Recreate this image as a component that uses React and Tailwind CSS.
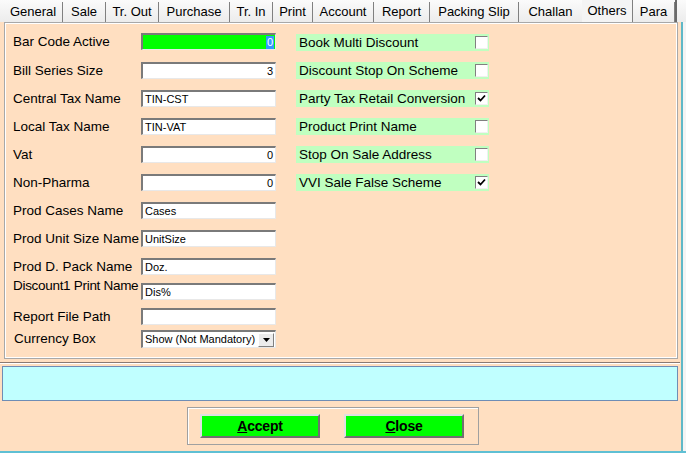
import React from "react";

const tabs = [
  { t: "General", w: "w-[59px]" },
  { t: "Sale", w: "w-[43px]" },
  { t: "Tr. Out", w: "w-[53px]" },
  { t: "Purchase", w: "w-[71px]" },
  { t: "Tr. In", w: "w-[43px]" },
  { t: "Print", w: "w-[40px]" },
  { t: "Account", w: "w-[61px]" },
  { t: "Report", w: "w-[56px]" },
  { t: "Packing Slip", w: "w-[89px]" },
  { t: "Challan", w: "w-[63px]", noSep: true },
  { t: "Others", w: "w-[51px]", sel: true },
  { t: "Para", w: "w-[42px]" },
];

function Input({ value, right, green, sel }) {
  return (
    <div
      className={`w-[135px] h-[17px] border-t-2 border-l-2 border-t-[#7a7a7a] border-l-[#7a7a7a] border-b border-r border-b-[#e8e8e8] border-r-[#e8e8e8] flex items-center ${
        green ? "bg-[#00ff00]" : "bg-white"
      } ${right ? "justify-end pr-[1px]" : "justify-start pl-[2px]"} text-[11px] leading-none text-black`}
    >
      {sel ? (
        <span className="bg-[#3399ff] text-white px-[1px] h-[13px] flex items-center">{value}</span>
      ) : (
        <span className={right ? "pr-[1px]" : ""}>{value}</span>
      )}
    </div>
  );
}

function Check({ checked }) {
  return (
    <div className="w-[13px] h-[13px] bg-white border border-t-[#808080] border-l-[#808080] border-b-[#f0f0f0] border-r-[#f0f0f0] flex items-center justify-center">
      {checked && (
        <svg width="9" height="9" viewBox="0 0 9 9">
          <path d="M1 4 L3.5 6.5 L8 1.5" stroke="black" strokeWidth="1.8" fill="none" />
        </svg>
      )}
    </div>
  );
}

function RRow({ label, checked, cls }) {
  return (
    <div className={`w-[193px] h-[17px] bg-[#c0ffc0] flex items-center justify-between pl-[3px] pr-[1px] ${cls}`}>
      <span className="text-[13.5px] leading-none text-black">{label}</span>
      <Check checked={checked} />
    </div>
  );
}

function LRow({ label, children, cls }) {
  return (
    <div className={`flex items-center h-[17px] ${cls}`}>
      <div className="w-[128px] text-[13.5px] leading-none text-black whitespace-nowrap">{label}</div>
      {children}
    </div>
  );
}

export default function App() {
  return (
    <div className="w-[686px] h-[453px] bg-[#ffdfc1] overflow-hidden flex flex-col font-['Liberation_Sans',Arial,sans-serif] text-black">
      {/* Tab strip */}
      <div className="h-[22px] w-full flex items-end bg-gradient-to-b from-[#fbfbfb] to-[#ececec] pl-[4px] shrink-0">
        {tabs.map((tb) => (
          <div
            key={tb.t}
            className={`${tb.w} flex justify-center text-[13px] leading-none ${
              tb.sel
                ? "h-[22px] items-start pt-[4px] bg-[#f4f4f4] border-r border-r-[#808080]"
                : tb.noSep
                ? "h-[20px] items-start pt-[3px]"
                : "h-[20px] items-start pt-[3px] border-r border-r-[#808080]"
            }`}
          >
            <span>{tb.t}</span>
          </div>
        ))}
        <div className="w-[2px] h-[22px] bg-[#6a6a6a]" />
      </div>

      <div className="flex flex-1">
        <div className="w-[681px] flex flex-col">
          {/* Panel */}
          <div className="ml-[4px] w-[674px] h-[337px] border border-[#a8a8a8] shadow-[inset_1px_1px_0_#ffffff,inset_-1px_-1px_0_#ffffff] flex">
            <div className="flex flex-col pl-[8px] pt-[10px]">
              <LRow label="Bar Code Active">
                <Input value="0" right green sel />
              </LRow>
              <LRow label="Bill Series Size" cls="mt-[12px]">
                <Input value="3" right />
              </LRow>
              <LRow label="Central Tax Name" cls="mt-[11px]">
                <Input value="TIN-CST" />
              </LRow>
              <LRow label="Local Tax Name" cls="mt-[11px]">
                <Input value="TIN-VAT" />
              </LRow>
              <LRow label="Vat" cls="mt-[11px]">
                <Input value="0" right />
              </LRow>
              <LRow label="Non-Pharma" cls="mt-[11px]">
                <Input value="0" right />
              </LRow>
              <LRow label="Prod Cases Name" cls="mt-[11px]">
                <Input value="Cases" />
              </LRow>
              <LRow label="Prod Unit Size Name" cls="mt-[11px]">
                <Input value="UnitSize" />
              </LRow>
              <LRow label="Prod D. Pack Name" cls="mt-[11px]">
                <Input value="Doz." />
              </LRow>
              <div className="flex h-[22px] mt-[3px]">
                <div className="w-[128px] text-[13.5px] leading-[16px] tracking-[-0.3px] whitespace-nowrap self-start">Discount1 Print Name</div>
                <div className="self-end">
                  <Input value="Dis%" />
                </div>
              </div>
              <LRow label="Report File Path" cls="mt-[8px]">
                <Input value="" />
              </LRow>
              <div className="flex items-center h-[18px] mt-[5px]">
                <div className="w-[128px] text-[13.5px] leading-none pl-[1px]">Currency Box</div>
                <div className="w-[135px] h-[18px] bg-white border-t-2 border-l-2 border-t-[#7a7a7a] border-l-[#7a7a7a] border-b border-r border-b-[#e8e8e8] border-r-[#e8e8e8] flex items-center justify-between pl-[2px] pr-[1px]">
                  <span className="text-[11px] leading-none">Show (Not Mandatory)</span>
                  <div className="w-[16px] h-[14px] bg-[#ececec] border border-t-white border-l-white border-b-[#808080] border-r-[#808080] flex items-center justify-center">
                    <svg width="7" height="4" viewBox="0 0 7 4">
                      <path d="M0 0 H7 L3.5 4 Z" fill="black" />
                    </svg>
                  </div>
                </div>
              </div>
            </div>
            <div className="flex flex-col ml-[20px] pt-[11px]">
              <RRow label="Book Multi Discount" />
              <RRow label="Discount Stop On Scheme" cls="mt-[11px]" />
              <RRow label="Party Tax Retail Conversion" checked cls="mt-[11px]" />
              <RRow label="Product Print Name" cls="mt-[11px]" />
              <RRow label="Stop On Sale Address" cls="mt-[11px]" />
              <RRow label="VVI Sale False Scheme" checked cls="mt-[11px]" />
            </div>
          </div>

          {/* separator line */}
          <div className="mt-[3px] h-[2px] w-[680px] border-t border-t-[#8a7a72] border-b border-b-white" />

          {/* status box */}
          <div className="mt-[2px] ml-[2px] w-[676px] h-[35px] bg-[#c0ffff] border border-[#6f8db5]" />

          {/* button group */}
          <div className="mt-[6px] ml-[187px] w-[292px] h-[38px] border border-[#a0a0a0] shadow-[inset_1px_1px_0_#ffffff] flex items-center pl-[12px] gap-[24px]">
            <button className="w-[120px] h-[24px] bg-[#00ff00] border-2 border-t-[#e0e0e0] border-l-[#e0e0e0] border-b-[#707070] border-r-[#707070] text-[14px] font-bold leading-none tracking-[-0.2px] flex items-center justify-center">
              <span className="underline">A</span>ccept
            </button>
            <button className="w-[120px] h-[24px] bg-[#00ff00] border-2 border-t-[#e0e0e0] border-l-[#e0e0e0] border-b-[#707070] border-r-[#707070] text-[14px] font-bold leading-none tracking-[-0.2px] flex items-center justify-center">
              <span className="underline">C</span>lose
            </button>
          </div>
        </div>
        <div className="w-[2px] bg-[#5fb8c8]" />
        <div className="flex-1 bg-[#f4f4f4]" />
      </div>
      <div className="h-[2px] w-full bg-[#5fc0d4] shrink-0" />
    </div>
  );
}
